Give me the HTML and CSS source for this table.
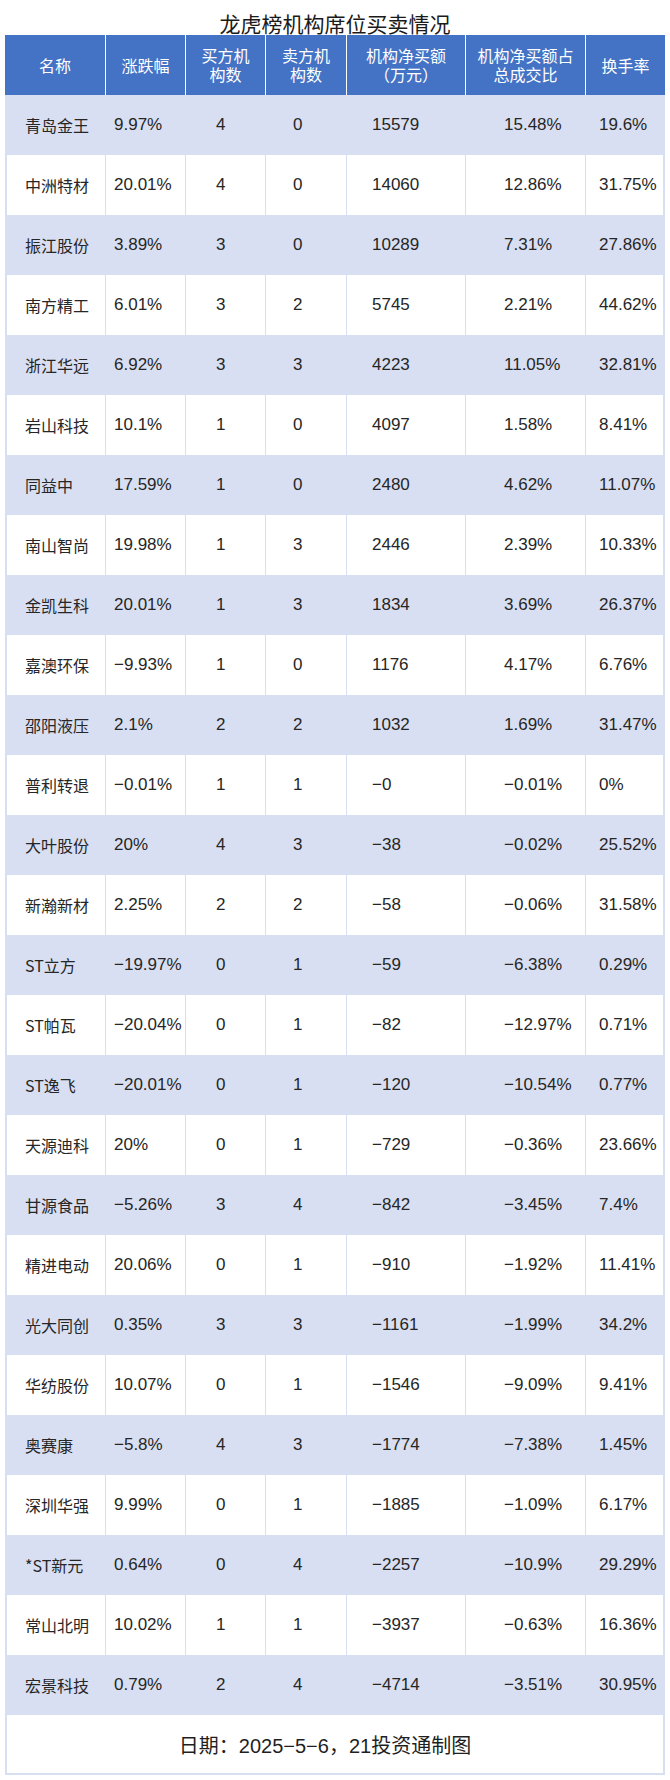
FILE: index.html
```html
<!DOCTYPE html>
<html lang="zh-CN">
<head>
<meta charset="utf-8">
<title>龙虎榜机构席位买卖情况</title>
<link rel="stylesheet" href="styles.css">
</head>
<body>
<div class="title">龙虎榜机构席位买卖情况</div>
<div class="sheet">
  <div class="row head">
    <div class="h">名称</div>
    <div class="h">涨跌幅</div>
    <div class="h">买方机<br>构数</div>
    <div class="h">卖方机<br>构数</div>
    <div class="h">机构净买额<br>（万元）</div>
    <div class="h">机构净买额占<br>总成交比</div>
    <div class="h">换手率</div>
  </div>
  <div class="body">
    <div class="row odd"><div class="c n">青岛金王</div><div class="c c2">9.97%</div><div class="c c3">4</div><div class="c c4">0</div><div class="c c5">15579</div><div class="c c6">15.48%</div><div class="c c7">19.6%</div></div>
    <div class="row"><div class="c n">中洲特材</div><div class="c c2">20.01%</div><div class="c c3">4</div><div class="c c4">0</div><div class="c c5">14060</div><div class="c c6">12.86%</div><div class="c c7">31.75%</div></div>
    <div class="row odd"><div class="c n">振江股份</div><div class="c c2">3.89%</div><div class="c c3">3</div><div class="c c4">0</div><div class="c c5">10289</div><div class="c c6">7.31%</div><div class="c c7">27.86%</div></div>
    <div class="row"><div class="c n">南方精工</div><div class="c c2">6.01%</div><div class="c c3">3</div><div class="c c4">2</div><div class="c c5">5745</div><div class="c c6">2.21%</div><div class="c c7">44.62%</div></div>
    <div class="row odd"><div class="c n">浙江华远</div><div class="c c2">6.92%</div><div class="c c3">3</div><div class="c c4">3</div><div class="c c5">4223</div><div class="c c6">11.05%</div><div class="c c7">32.81%</div></div>
    <div class="row"><div class="c n">岩山科技</div><div class="c c2">10.1%</div><div class="c c3">1</div><div class="c c4">0</div><div class="c c5">4097</div><div class="c c6">1.58%</div><div class="c c7">8.41%</div></div>
    <div class="row odd"><div class="c n">同益中</div><div class="c c2">17.59%</div><div class="c c3">1</div><div class="c c4">0</div><div class="c c5">2480</div><div class="c c6">4.62%</div><div class="c c7">11.07%</div></div>
    <div class="row"><div class="c n">南山智尚</div><div class="c c2">19.98%</div><div class="c c3">1</div><div class="c c4">3</div><div class="c c5">2446</div><div class="c c6">2.39%</div><div class="c c7">10.33%</div></div>
    <div class="row odd"><div class="c n">金凯生科</div><div class="c c2">20.01%</div><div class="c c3">1</div><div class="c c4">3</div><div class="c c5">1834</div><div class="c c6">3.69%</div><div class="c c7">26.37%</div></div>
    <div class="row"><div class="c n">嘉澳环保</div><div class="c c2">−9.93%</div><div class="c c3">1</div><div class="c c4">0</div><div class="c c5">1176</div><div class="c c6">4.17%</div><div class="c c7">6.76%</div></div>
    <div class="row odd"><div class="c n">邵阳液压</div><div class="c c2">2.1%</div><div class="c c3">2</div><div class="c c4">2</div><div class="c c5">1032</div><div class="c c6">1.69%</div><div class="c c7">31.47%</div></div>
    <div class="row"><div class="c n">普利转退</div><div class="c c2">−0.01%</div><div class="c c3">1</div><div class="c c4">1</div><div class="c c5">−0</div><div class="c c6">−0.01%</div><div class="c c7">0%</div></div>
    <div class="row odd"><div class="c n">大叶股份</div><div class="c c2">20%</div><div class="c c3">4</div><div class="c c4">3</div><div class="c c5">−38</div><div class="c c6">−0.02%</div><div class="c c7">25.52%</div></div>
    <div class="row"><div class="c n">新瀚新材</div><div class="c c2">2.25%</div><div class="c c3">2</div><div class="c c4">2</div><div class="c c5">−58</div><div class="c c6">−0.06%</div><div class="c c7">31.58%</div></div>
    <div class="row odd"><div class="c n">ST立方</div><div class="c c2">−19.97%</div><div class="c c3">0</div><div class="c c4">1</div><div class="c c5">−59</div><div class="c c6">−6.38%</div><div class="c c7">0.29%</div></div>
    <div class="row"><div class="c n">ST帕瓦</div><div class="c c2">−20.04%</div><div class="c c3">0</div><div class="c c4">1</div><div class="c c5">−82</div><div class="c c6">−12.97%</div><div class="c c7">0.71%</div></div>
    <div class="row odd"><div class="c n">ST逸飞</div><div class="c c2">−20.01%</div><div class="c c3">0</div><div class="c c4">1</div><div class="c c5">−120</div><div class="c c6">−10.54%</div><div class="c c7">0.77%</div></div>
    <div class="row"><div class="c n">天源迪科</div><div class="c c2">20%</div><div class="c c3">0</div><div class="c c4">1</div><div class="c c5">−729</div><div class="c c6">−0.36%</div><div class="c c7">23.66%</div></div>
    <div class="row odd"><div class="c n">甘源食品</div><div class="c c2">−5.26%</div><div class="c c3">3</div><div class="c c4">4</div><div class="c c5">−842</div><div class="c c6">−3.45%</div><div class="c c7">7.4%</div></div>
    <div class="row"><div class="c n">精进电动</div><div class="c c2">20.06%</div><div class="c c3">0</div><div class="c c4">1</div><div class="c c5">−910</div><div class="c c6">−1.92%</div><div class="c c7">11.41%</div></div>
    <div class="row odd"><div class="c n">光大同创</div><div class="c c2">0.35%</div><div class="c c3">3</div><div class="c c4">3</div><div class="c c5">−1161</div><div class="c c6">−1.99%</div><div class="c c7">34.2%</div></div>
    <div class="row"><div class="c n">华纺股份</div><div class="c c2">10.07%</div><div class="c c3">0</div><div class="c c4">1</div><div class="c c5">−1546</div><div class="c c6">−9.09%</div><div class="c c7">9.41%</div></div>
    <div class="row odd"><div class="c n">奥赛康</div><div class="c c2">−5.8%</div><div class="c c3">4</div><div class="c c4">3</div><div class="c c5">−1774</div><div class="c c6">−7.38%</div><div class="c c7">1.45%</div></div>
    <div class="row"><div class="c n">深圳华强</div><div class="c c2">9.99%</div><div class="c c3">0</div><div class="c c4">1</div><div class="c c5">−1885</div><div class="c c6">−1.09%</div><div class="c c7">6.17%</div></div>
    <div class="row odd"><div class="c n">*ST新元</div><div class="c c2">0.64%</div><div class="c c3">0</div><div class="c c4">4</div><div class="c c5">−2257</div><div class="c c6">−10.9%</div><div class="c c7">29.29%</div></div>
    <div class="row"><div class="c n">常山北明</div><div class="c c2">10.02%</div><div class="c c3">1</div><div class="c c4">1</div><div class="c c5">−3937</div><div class="c c6">−0.63%</div><div class="c c7">16.36%</div></div>
    <div class="row odd"><div class="c n">宏景科技</div><div class="c c2">0.79%</div><div class="c c3">2</div><div class="c c4">4</div><div class="c c5">−4714</div><div class="c c6">−3.51%</div><div class="c c7">30.95%</div></div>
  </div>
  <div class="foot">日期：2025−5−6，21投资通制图</div>
</div>
</body>
</html>
```

FILE: styles.css
```css
html, body {
  margin: 0;
  padding: 0;
  background: #ffffff;
}

body {
  font-family: "Liberation Sans", "Noto Sans CJK SC", sans-serif;
  color: #262626;
}

.title {
  box-sizing: border-box;
  height: 35px;
  padding-top: 11px;
  font-family: "Noto Sans CJK SC", sans-serif;
  font-size: 21px;
  line-height: 24px;
  text-align: center;
  color: #1a1a1a;
}

.sheet {
  width: 660px;
  margin-left: 5px;
}

.row {
  display: grid;
  height: 60px;
}

.head {
  grid-template-columns: 100px 80px 80px 81px 119px 120px 80px;
  background: #4472c4;
  color: #ffffff;
}

.h {
  box-sizing: border-box;
  display: flex;
  align-items: center;
  justify-content: center;
  text-align: center;
  font-family: "Noto Sans CJK SC", sans-serif;
  font-size: 16px;
  line-height: 19px;
  border-left: 1px solid #ffffff;
}

.h:first-child {
  border-left: none;
}

.body {
  border-left: 2px solid #d9dff2;
  border-right: 2px solid #d9dff2;
}

.body .row {
  grid-template-columns: 98px 80px 80px 81px 119px 120px 78px;
}

.row.odd {
  background: #d9dff2;
}

.c {
  box-sizing: border-box;
  display: flex;
  align-items: center;
  white-space: nowrap;
  border-left: 1px solid #d9dff2;
  font-family: "Liberation Sans", "Noto Sans CJK SC", sans-serif;
  font-size: 17px;
}

.c.n {
  border-left: none;
  padding-left: 18px;
  font-family: "Noto Sans CJK SC", sans-serif;
  font-size: 16px;
}

.c2 { padding-left: 8px; }
.c3 { padding-left: 30px; }
.c4 { padding-left: 27px; }
.c5 { padding-left: 25px; }
.c6 { padding-left: 38px; }
.c7 { padding-left: 13px; }

.foot {
  box-sizing: border-box;
  height: 60px;
  border: 2px solid #d9dff2;
  border-top: none;
  display: flex;
  align-items: center;
  justify-content: center;
  padding-right: 20px;
  font-family: "Liberation Sans", "Noto Sans CJK SC", sans-serif;
  font-size: 20px;
  color: #1f1f1f;
}
```
